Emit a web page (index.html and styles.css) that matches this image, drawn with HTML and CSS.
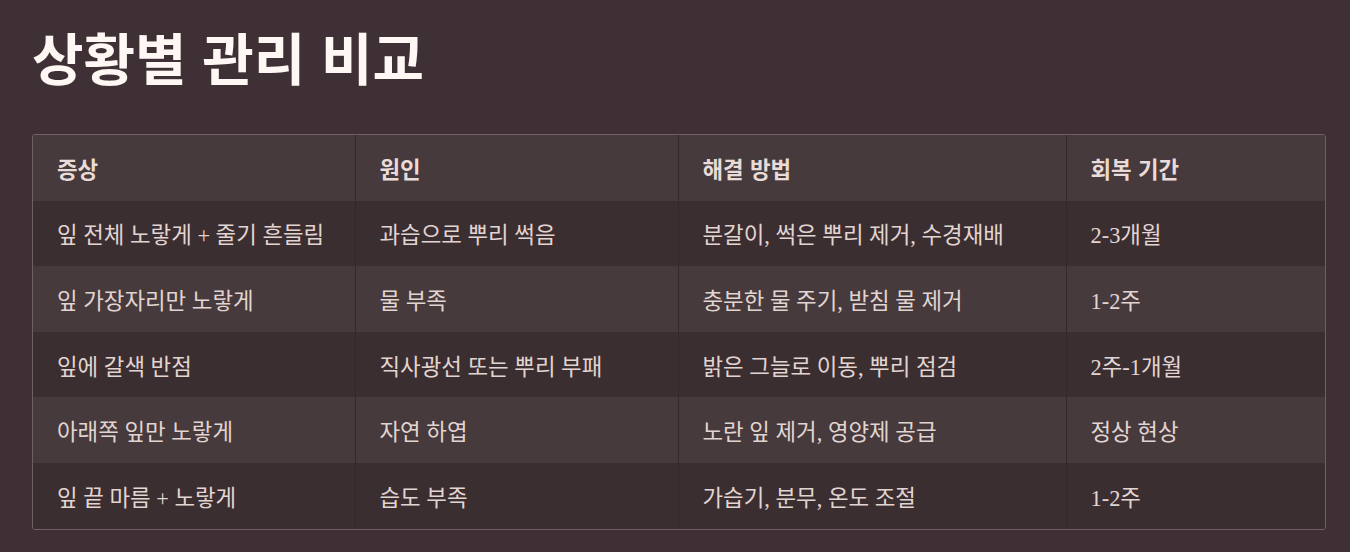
FILE: index.html
```html
<!DOCTYPE html>
<html lang="ko">
<head>
<meta charset="utf-8">
<link rel="stylesheet" href="styles.css">
</head>
<body>
<main class="page">
  <h1 class="title">상황별 관리 비교</h1>
  <div class="table-wrap">
    <table class="compare">
      <thead>
        <tr><th class="c1">증상</th><th class="c2">원인</th><th class="c3">해결 방법</th><th class="c4">회복 기간</th></tr>
      </thead>
      <tbody>
        <tr><td>잎 전체 노랗게 + 줄기 흔들림</td><td>과습으로 뿌리 썩음</td><td>분갈이, 썩은 뿌리 제거, 수경재배</td><td>2-3개월</td></tr>
        <tr><td>잎 가장자리만 노랗게</td><td>물 부족</td><td>충분한 물 주기, 받침 물 제거</td><td>1-2주</td></tr>
        <tr><td>잎에 갈색 반점</td><td>직사광선 또는 뿌리 부패</td><td>밝은 그늘로 이동, 뿌리 점검</td><td>2주-1개월</td></tr>
        <tr><td>아래쪽 잎만 노랗게</td><td>자연 하엽</td><td>노란 잎 제거, 영양제 공급</td><td>정상 현상</td></tr>
        <tr><td>잎 끝 마름 + 노랗게</td><td>습도 부족</td><td>가습기, 분무, 온도 조절</td><td>1-2주</td></tr>
      </tbody>
    </table>
  </div>
</main>
</body>
</html>
```

FILE: styles.css
```css
html, body {
  margin: 0;
  padding: 0;
  background: #3e3034;
}
.page {
  padding: 22px 24px 24px 32px;
}
.title {
  margin: 0 0 45px 0;
  font-family: "Noto Sans CJK KR", "Noto Sans", sans-serif;
  font-weight: 700;
  font-size: 56px;
  line-height: 67px;
  color: #fff7f4;
}
.table-wrap {
  width: 1292px;
  border: 1px solid #6e6064;
  border-radius: 3px;
  overflow: hidden;
}
.compare {
  width: 100%;
  border-collapse: collapse;
  table-layout: fixed;
}
.c1 { width: 322px; }
.c2 { width: 323px; }
.c3 { width: 388px; }
.c4 { width: auto; }
.compare th, .compare td {
  height: 65.6px;
  padding: 0 24px;
  text-align: left;
  vertical-align: middle;
  box-sizing: border-box;
  border-right: 1px solid #35282b;
}
.compare th:last-child, .compare td:last-child {
  border-right: none;
}
.compare th {
  font-family: "Noto Sans CJK KR", sans-serif;
  font-weight: 700;
  font-size: 22.4px;
  color: #e9dcd8;
  background: #463a3d;
}
.compare td {
  font-family: "Liberation Serif", "Noto Sans CJK KR", serif;
  font-size: 22.4px;
  color: #e2d5d1;
}
.compare tbody tr:nth-child(odd) td { background: #3b2e31; }
.compare tbody tr:nth-child(even) td { background: #463a3d; }
```
